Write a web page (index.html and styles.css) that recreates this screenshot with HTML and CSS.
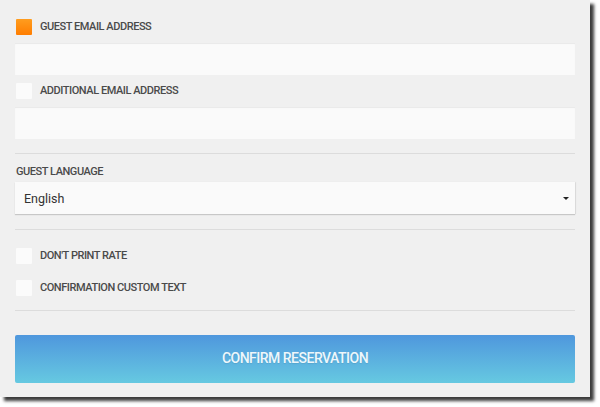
FILE: index.html
```html
<!DOCTYPE html>
<html>
<head>
<meta charset="utf-8">
<link rel="stylesheet" href="styles.css">
</head>
<body>
<div class="panel">
  <div class="check-row">
    <span class="box box-on"></span>
    <span class="label">GUEST EMAIL ADDRESS</span>
  </div>
  <div class="field"></div>
  <div class="check-row">
    <span class="box"></span>
    <span class="label">ADDITIONAL EMAIL ADDRESS</span>
  </div>
  <div class="field"></div>
  <div class="divider d1"></div>
  <div class="field-label">GUEST LANGUAGE</div>
  <div class="select">
    <span class="select-text">English</span>
    <span class="caret"></span>
  </div>
  <div class="divider d2"></div>
  <div class="check-row r3">
    <span class="box"></span>
    <span class="label">DON'T PRINT RATE</span>
  </div>
  <div class="check-row r4">
    <span class="box"></span>
    <span class="label">CONFIRMATION CUSTOM TEXT</span>
  </div>
  <div class="divider d3"></div>
  <div class="button">CONFIRM RESERVATION</div>
</div>
</body>
</html>
```

FILE: styles.css
```css
html, body {
  margin: 0;
  padding: 0;
  background: #ffffff;
}
body {
  width: 600px;
  height: 407px;
  font-family: "Roboto", "Lato", sans-serif;
}
.panel {
  width: 590px;
  height: 397px;
  box-sizing: border-box;
  padding: 17px 15px 0 15px;
  background: #f0f0f0;
  box-shadow: 4px 4px 3px #3c3c3c;
  display: flex;
  flex-direction: column;
}
.check-row {
  height: 20px;
  display: flex;
  align-items: center;
}
.box {
  width: 16px;
  height: 16px;
  margin-left: 1px;
  border-radius: 1px;
  background: #fbfbfb;
}
.box-on {
  background: linear-gradient(#ff9d1f, #ff7d00);
}
.label {
  margin-left: 8px;
  margin-top: -1px;
  font-size: 11px;
  font-weight: 500;
  color: #4a4a4a;
  letter-spacing: -0.45px;
}
.field {
  margin-top: 6px;
  margin-bottom: 6px;
  height: 32px;
  background: #fafafa;
  box-shadow: inset 0 1px 1px rgba(0,0,0,0.07);
}
.divider {
  height: 1px;
  background: #dcdcdc;
}
.d1 { margin-top: 8px; }
.field-label {
  margin-top: 11px;
  height: 14px;
  line-height: 14px;
  font-size: 11px;
  font-weight: 500;
  letter-spacing: -0.45px;
  color: #4a4a4a;
  padding-left: 1px;
}
.select {
  margin-top: 3px;
  height: 32px;
  background: #fafafa;
  box-shadow: 0 1px 1px rgba(0,0,0,0.16), 1px 0 1px rgba(0,0,0,0.06);
  display: flex;
  align-items: center;
  justify-content: space-between;
  padding: 0 6px 0 9px;
}
.select-text {
  font-size: 12.5px;
  color: #333333;
}
.caret {
  width: 0;
  height: 0;
  border-left: 3px solid transparent;
  border-right: 3px solid transparent;
  border-top: 3px solid #222;
  margin-top: 1px;
}
.d2 { margin-top: 15px; }
.r3 { margin-top: 16px; }
.r4 { margin-top: 12px; }
.d3 { margin-top: 12px; }
.button {
  margin-top: 24px;
  height: 48px;
  border-radius: 2px;
  background: linear-gradient(#4f97dd, #66c9e1);
  color: #eef7fb;
  font-size: 14px;
  font-weight: 500;
  letter-spacing: -0.5px;
  display: flex;
  align-items: center;
  justify-content: center;
  padding-bottom: 2px;
  box-sizing: border-box;
  text-shadow: 0 1px 1px rgba(0,0,0,0.08);
}
```
